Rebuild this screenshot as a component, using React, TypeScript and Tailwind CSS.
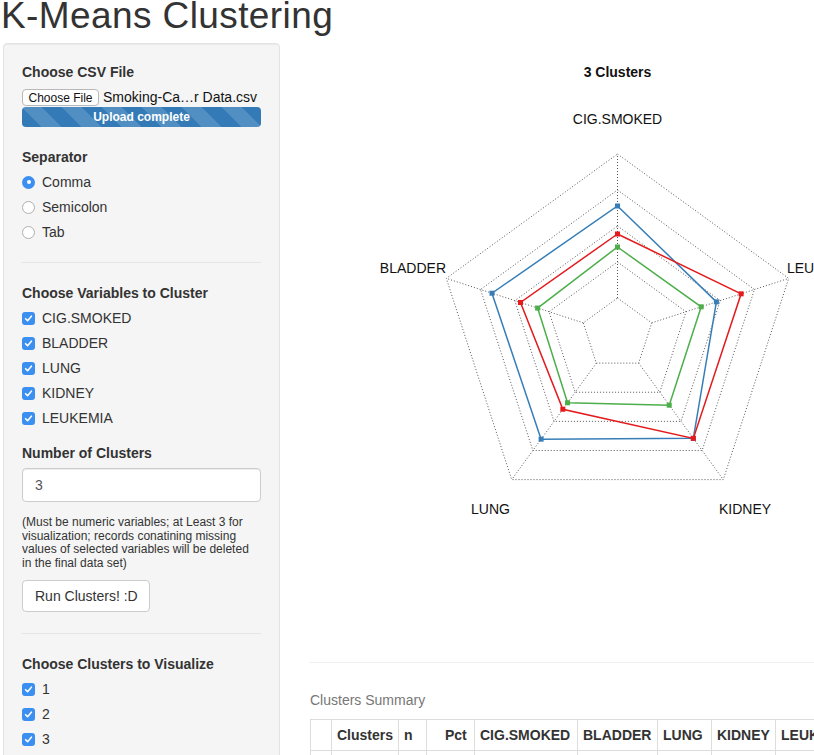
const axes = ["CIG.SMOKED", "LEUKEMIA", "KIDNEY", "LUNG", "BLADDER"];

const clusters = [
  { color: "#377eb8", r: [128, 104, 129, 130, 132] },
  { color: "#e41a1c", r: [100, 130, 129, 93, 102] },
  { color: "#4daf4a", r: [87, 88, 88, 85, 84] },
];

const cx = 307.5;
const cy = 291;

function pt(i: number, r: number) {
  const a = ((-90 + i * 72) * Math.PI) / 180;
  return [cx + r * Math.cos(a), cy + r * Math.sin(a)];
}

function ring(r: number) {
  return axes.map((_, i) => pt(i, r).join(",")).join(" ");
}

function Check() {
  return (
    <span className="flex h-[13px] w-[13px] shrink-0 items-center justify-center rounded-[3px] bg-[#3b8ff0]">
      <svg width="9" height="9" viewBox="0 0 9 9">
        <path d="M1.6 4.7 L3.6 6.7 L7.4 2.2" stroke="white" strokeWidth="1.6" fill="none" strokeLinecap="round" strokeLinejoin="round" />
      </svg>
    </span>
  );
}

function Radio({ on }: { on?: boolean }) {
  return on ? (
    <span className="flex h-[13px] w-[13px] shrink-0 items-center justify-center rounded-full bg-[#3b8ff0]">
      <span className="h-[4px] w-[4px] rounded-full bg-white" />
    </span>
  ) : (
    <span className="h-[13px] w-[13px] shrink-0 rounded-full border border-[#b0b0b0] bg-white" />
  );
}

function Label({ children, className = "" }: { children: React.ReactNode; className?: string }) {
  return <div className={`text-[14px] font-bold leading-[20px] ${className}`}>{children}</div>;
}

function CheckList({ items }: { items: string[] }) {
  return (
    <div className="mt-[5px] flex flex-col gap-[5px]">
      {items.map((t) => (
        <div key={t} className="flex h-[20px] items-center gap-[7px] text-[14px]">
          <Check />
          <span>{t}</span>
        </div>
      ))}
    </div>
  );
}

function RadarChart() {
  const labels = [
    { t: "3 Clusters", x: 307.5, y: 34, anchor: "middle", bold: true },
    { t: "CIG.SMOKED", x: 307.5, y: 81, anchor: "middle" },
    { t: "BLADDER", x: 136, y: 230, anchor: "end" },
    { t: "LEUKEMIA", x: 477, y: 230, anchor: "start" },
    { t: "LUNG", x: 180.5, y: 471, anchor: "middle" },
    { t: "KIDNEY", x: 435, y: 471, anchor: "middle" },
  ];
  return (
    <svg width="615" height="619" className="block">
      {[36, 72, 108, 144, 180].map((r) => (
        <polygon key={r} points={ring(r)} fill="none" stroke="#555" strokeWidth="1" strokeDasharray="1 2" />
      ))}
      {axes.map((_, i) => {
        const [x1, y1] = pt(i, 36);
        const [x2, y2] = pt(i, 180);
        return <line key={i} x1={x1} y1={y1} x2={x2} y2={y2} stroke="#555" strokeWidth="1" strokeDasharray="1 2" />;
      })}
      {clusters.map((c) => (
        <g key={c.color}>
          <polygon points={c.r.map((r, i) => pt(i, r).join(",")).join(" ")} fill="none" stroke={c.color} strokeWidth="1.5" />
          {c.r.map((r, i) => {
            const [x, y] = pt(i, r);
            return <rect key={i} x={x - 2.5} y={y - 2.5} width="5" height="5" fill={c.color} />;
          })}
        </g>
      ))}
      {labels.map((l) => (
        <text
          key={l.t}
          x={l.x}
          y={l.y}
          textAnchor={l.anchor as "middle" | "start" | "end"}
          fontFamily="'Liberation Sans', Arial, sans-serif"
          fontSize="14"
          fontWeight={l.bold ? 700 : 400}
          fill="#111"
        >
          {l.t}
        </text>
      ))}
    </svg>
  );
}

const cols = [
  { t: "", w: 21 },
  { t: "Clusters", w: 67 },
  { t: "n", w: 28 },
  { t: "Pct", w: 48, pl: 18 },
  { t: "CIG.SMOKED", w: 103 },
  { t: "BLADDER", w: 80 },
  { t: "LUNG", w: 54 },
  { t: "KIDNEY", w: 64 },
  { t: "LEUKEMIA", w: 90 },
];

export default function App() {
  return (
    <div className="relative h-[755px] w-[814px] overflow-hidden bg-white font-['Liberation_Sans',Arial,sans-serif] text-[#333]">
      <h1 className="-mt-[3px] ml-[1px] whitespace-nowrap text-[37px] leading-[37px] tracking-[0.4px]">K-Means Clustering</h1>

      <div className="mt-[9px] flex">
        {/* Sidebar */}
        <div className="ml-[3px] h-[760px] w-[277px] shrink-0 rounded border border-[#e3e3e3] bg-[#f5f5f5] px-[18px] pt-[18px] shadow-[inset_0_1px_1px_rgba(0,0,0,0.05)]">
          <Label>Choose CSV File</Label>
          <div className="mt-[7px] flex h-[17px] items-center">
            <span className="flex h-[17px] w-[77px] items-center justify-center rounded border border-[#b8b8b8] bg-white text-[12px] text-[#111]">
              Choose File
            </span>
            <span className="ml-[4px] whitespace-nowrap text-[14px] text-[#111]">Smoking-Ca…r Data.csv</span>
          </div>
          <div className="mt-[1px] flex h-[20px] items-center justify-center rounded bg-[#337ab7] bg-[linear-gradient(45deg,rgba(255,255,255,.15)_25%,transparent_25%,transparent_50%,rgba(255,255,255,.15)_50%,rgba(255,255,255,.15)_75%,transparent_75%,transparent)] bg-[length:40px_40px] text-[12px] font-bold text-white">
            Upload complete
          </div>

          <Label className="mt-[20px]">Separator</Label>
          <div className="mt-[5px] flex flex-col gap-[5px]">
            {["Comma", "Semicolon", "Tab"].map((t, i) => (
              <div key={t} className="flex h-[20px] items-center gap-[7px] text-[14px]">
                <Radio on={i === 0} />
                <span>{t}</span>
              </div>
            ))}
          </div>

          <div className="mt-[20px] border-t border-[#e5e5e5]" />

          <Label className="mt-[20px]">Choose Variables to Cluster</Label>
          <CheckList items={["CIG.SMOKED", "BLADDER", "LUNG", "KIDNEY", "LEUKEMIA"]} />

          <Label className="mt-[15px]">Number of Clusters</Label>
          <div className="mt-[5px] flex h-[34px] items-center rounded border border-[#ccc] bg-white px-[12px] text-[14px] text-[#555] shadow-[inset_0_1px_1px_rgba(0,0,0,0.075)]">
            3
          </div>

          <p className="mt-[14px] text-[12px] leading-[13.5px]">
            (Must be numeric variables; at Least 3 for visualization; records conatining missing values of selected variables will be deleted in the final data set)
          </p>

          <div className="mt-[10px] flex h-[32px] w-[128px] items-center whitespace-nowrap rounded border border-[#ccc] bg-white px-[12px] text-[14px]">
            Run Clusters! :D
          </div>

          <div className="mt-[21px] border-t border-[#e5e5e5]" />

          <Label className="mt-[20px]">Choose Clusters to Visualize</Label>
          <CheckList items={["1", "2", "3"]} />
        </div>

        {/* Main */}
        <div className="ml-[30px] w-[615px] shrink-0">
          <RadarChart />
          <div className="border-t border-[#eee]" />
          <div className="mt-[27px] text-[14px] leading-[20px] text-[#777]">Clusters Summary</div>
          <table className="mt-[9px] table-fixed border-collapse text-[14px]">
            <thead>
              <tr className="h-[31px]">
                {cols.map((c, i) => (
                  <th
                    key={i}
                    style={{ width: c.w, paddingLeft: c.pl ?? 5 }}
                    className="whitespace-nowrap border border-[#ddd] text-left font-bold"
                  >
                    {c.t}
                  </th>
                ))}
              </tr>
            </thead>
            <tbody>
              <tr className="h-[31px]">
                {cols.map((_, i) => (
                  <td key={i} className="border border-[#ddd]" />
                ))}
              </tr>
            </tbody>
          </table>
        </div>
      </div>
    </div>
  );
}
